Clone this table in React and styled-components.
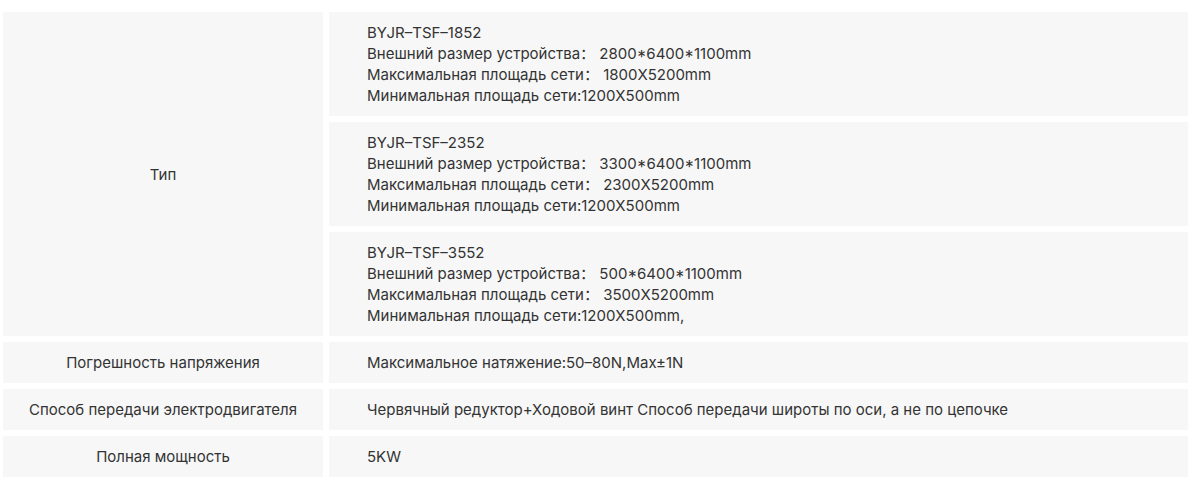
import React from "react";
import styled, { createGlobalStyle } from "styled-components";

const Global = createGlobalStyle`
  html, body { margin: 0; padding: 0; background: #fff; }
  body { font-family: Inter, "Noto Sans CJK SC", sans-serif; }
`;

const Table = styled.div`
  display: grid;
  grid-template-columns: 320px 859px;
  gap: 6px;
  padding: 12px 12px 8px 3px;
`;

const Cell = styled.div`
  background: #f7f7f7;
  color: #333;
  font-size: 15px;
  line-height: 21px;
  padding: 10px 0;
`;

const Label = styled(Cell)`
  display: flex;
  align-items: center;
  justify-content: center;
  text-align: center;
  grid-row: span ${(p) => p.$span || 1};
`;

const Value = styled(Cell)`
  padding-left: 38px;
  padding-right: 20px;
`;

const Line = styled.div``;

const types = [
  [
    "BYJR–TSF–1852",
    "Внешний размер устройства： 2800*6400*1100mm",
    "Максимальная площадь сети： 1800X5200mm",
    "Минимальная площадь сети:1200X500mm",
  ],
  [
    "BYJR–TSF–2352",
    "Внешний размер устройства： 3300*6400*1100mm",
    "Максимальная площадь сети： 2300X5200mm",
    "Минимальная площадь сети:1200X500mm",
  ],
  [
    "BYJR–TSF–3552",
    "Внешний размер устройства： 500*6400*1100mm",
    "Максимальная площадь сети： 3500X5200mm",
    "Минимальная площадь сети:1200X500mm,",
  ],
];

const rows = [
  ["Погрешность напряжения", "Максимальное натяжение:50–80N,Max±1N"],
  [
    "Способ передачи электродвигателя",
    "Червячный редуктор+Ходовой винт Способ передачи широты по оси, а не по цепочке",
  ],
  ["Полная мощность", "5KW"],
];

export default function App() {
  return (
    <>
      <Global />
      <Table>
        <Label $span={3}>Тип</Label>
        {types.map((t, i) => (
          <Value key={i} style={i === 0 ? { gridColumn: 2, gridRow: 1 } : undefined}>
            {t.map((l, j) => (
              <Line key={j}>{l}</Line>
            ))}
          </Value>
        ))}
        {rows.map(([k, v]) => (
          <React.Fragment key={k}>
            <Label>{k}</Label>
            <Value>{v}</Value>
          </React.Fragment>
        ))}
      </Table>
    </>
  );
}
